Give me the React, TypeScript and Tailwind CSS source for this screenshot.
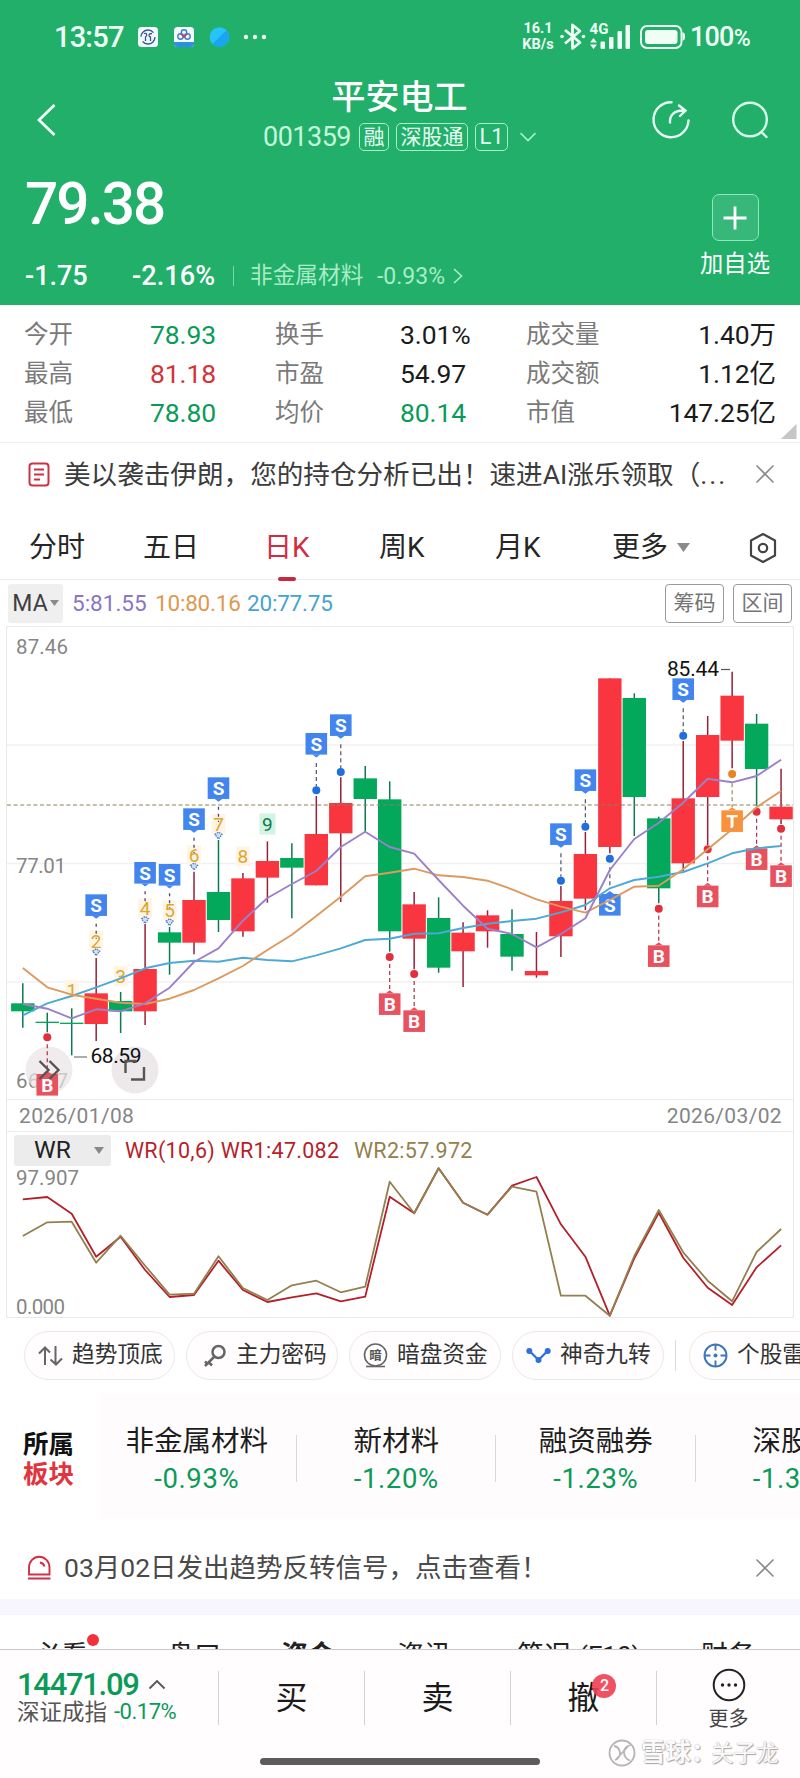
import React from "react";

const STEP = 24.46;
const cx = (i: number) => 22.8 + STEP * i - 7;
const cy = (v: number) => v / 3 - 7;

// [rising, high, bodyTop, bodyBottom, low]
const candles: [number, number, number, number, number][] = [
  [0, 1090, 1150, 1174, 1223], [0, 1178, 1205, 1209, 1237], [0, 1165, 1208, 1212, 1306],
  [1, 1014, 1120, 1212, 1263], [0, 1116, 1143, 1174, 1239], [1, 912, 1047, 1174, 1215],
  [0, 921, 937, 968, 1064], [1, 755, 840, 968, 1003], [0, 660, 816, 900, 936],
  [1, 759, 775, 934, 950], [1, 664, 723, 773, 848], [0, 670, 714, 743, 895],
  [1, 528, 642, 796, 796], [1, 472, 549, 640, 846], [0, 438, 475, 537, 635],
  [0, 484, 538, 934, 995], [1, 816, 853, 956, 1048], [0, 832, 894, 1043, 1058],
  [1, 907, 938, 994, 1101], [1, 871, 886, 934, 983], [0, 868, 942, 1010, 1052],
  [1, 936, 1053, 1066, 1073], [1, 798, 843, 949, 1011], [1, 636, 702, 836, 870],
  [1, 175, 175, 681, 700], [0, 220, 234, 531, 648], [0, 590, 595, 805, 850],
  [1, 363, 535, 730, 755], [1, 288, 345, 531, 675], [1, 155, 227, 362, 445],
  [0, 282, 311, 447, 558], [1, 446, 560, 598, 612],
];

const ma5 = [1152, 1166, 1195, 1168, 1174, 1150, 1103, 1026, 985, 902, 834, 792, 753, 681, 635, 681, 701, 780, 857, 926, 942, 982, 942, 895, 750, 657, 608, 548, 476, 487, 468, 419];
const ma10 = [1044, 1102, 1124, 1136, 1148, 1152, 1136, 1110, 1075, 1038, 990, 944, 888, 830, 769, 758, 746, 766, 771, 782, 808, 838, 860, 878, 840, 800, 797, 748, 688, 628, 562, 513];
const ma20 = [1186, 1150, 1128, 1102, 1075, 1045, 1029, 1022, 1025, 1013, 1020, 1024, 1006, 985, 960, 956, 941, 940, 924, 911, 903, 896, 877, 855, 805, 780, 770, 756, 730, 700, 685, 678];
const wr1 = [328, 321, 371, 500, 440, 540, 621, 615, 512, 600, 636, 622, 610, 634, 620, 320, 370, 235, 338, 374, 287, 261, 403, 500, 677, 505, 368, 503, 593, 645, 532, 466];
const wr2 = [438, 397, 395, 518, 437, 527, 614, 611, 499, 594, 630, 586, 572, 607, 590, 275, 370, 235, 338, 374, 290, 305, 617, 617, 677, 498, 360, 487, 572, 634, 486, 417];

const line = (vals: number[], y: (v: number) => number) =>
  vals.map((v, i) => `${cx(i).toFixed(1)},${y(v).toFixed(1)}`).join(" ");

// [index, box top, dot]
const sells: [number, number, number][] = [[12, 339, 511], [13, 283, 456], [22, 610, 782], [23, 448, 620], [27, 175, 347]];
const countedSells: [number, number, number][] = [[3, 823, 998], [5, 726, 901], [6, 732, 908], [7, 565, 741], [8, 472, 648]];
const buys: [number, number, number][] = [[1, 1362, 1252], [15, 1120, 1011], [16, 1171, 1062], [26, 976, 866], [28, 797, 688], [30, 685, 575], [31, 736, 626]];
const counts: [string, number, number][] = [["1", 2, 1110], ["2", 3, 962], ["3", 4, 1068], ["4", 5, 865], ["5", 6, 871], ["6", 7, 706], ["7", 8, 612], ["8", 9, 709]];

const SANS = "font-['Roboto','Noto_Sans_CJK_SC',sans-serif]";

function Flag({ x, top, letter, fill, up }: { x: number; top: number; letter: string; fill: string; up?: boolean }) {
  return (
    <g>
      <rect x={x - 10.8} y={top} width={21.6} height={21.6} fill={fill} />
      <path d={up ? `M${x - 4} ${top}l4 -3l4 3z` : `M${x - 4} ${top + 21.5}l4 3l4 -3z`} fill={fill} />
      <text x={x} y={top + 17.5} textAnchor="middle" fill="#fff" className="text-[19px] font-bold">{letter}</text>
    </g>
  );
}

function KChart() {
  return (
    <svg width={786} height={472} viewBox="0 0 786 472" className={`block ${SANS}`}>
      {[118, 236.5, 355].map((y) => <line key={y} x1={0} x2={786} y1={y} y2={y} stroke="#f1f1f1" strokeWidth={1.4} />)}
      <g fill="#858585" className="text-[20.5px]">
        <text x={9} y={26.5} textLength={52}>87.46</text>
        <text x={9} y={246} textLength={50}>77.01</text>
        <text x={9} y={461} textLength={52}>66.57</text>
      </g>
      {counts.map(([n, i, v]) => <rect key={n} x={cx(i) - 7} y={cy(v) - 10} width={14} height={20} fill="#fff5e6" />)}
      {candles.map(([r, h, t, b, l], i) => (
        <g key={i}>
          <line x1={cx(i)} x2={cx(i)} y1={cy(h)} y2={cy(l)} stroke={r ? "#98203a" : "#0b7a4c"} strokeWidth={1.5} />
          <rect x={cx(i) - 11.7} y={cy(t)} width={23.4} height={(b - t) / 3} fill={r ? "#f93640" : "#03a85b"} />
        </g>
      ))}
      <line x1={0} x2={786} y1={178} y2={178} stroke="#8d7f58" strokeWidth={1.2} strokeDasharray="4 2.6" />
      {sells.map(([i, top, dot]) => (
        <g key={i}>
          <line x1={cx(i)} x2={cx(i)} y1={cy(top + 90)} y2={cy(dot) - 4} stroke="#4f5266" strokeWidth={1.2} strokeDasharray="4 3" />
          <circle cx={cx(i)} cy={cy(dot)} r={4} fill="#1f6fe0" />
          <Flag x={cx(i)} top={cy(top)} letter="S" fill="#4285ee" />
        </g>
      ))}
      {countedSells.map(([i, top, dot]) => (
        <g key={i}>
          <line x1={cx(i)} x2={cx(i)} y1={cy(top + 88)} y2={cy(dot) - 14} stroke="#4a4a66" strokeWidth={1.3} strokeDasharray="3 4" />
          <path d={`M${cx(i) - 3.5} ${cy(dot) - 1.5}l3.5 -2.5l3.5 2.5l-3.5 4.5z`} fill="#cfe2f7" stroke="#4b7bbd" strokeWidth={1.3} strokeDasharray="1.5 1" />
          <Flag x={cx(i)} top={cy(top)} letter="S" fill="#4285ee" />
        </g>
      ))}
      {counts.map(([n, i, v]) => (
        <text key={n} x={cx(i)} y={cy(v) + 7} textAnchor="middle" fill="#dfa62c" className="text-[19px]">{n}</text>
      ))}
      <rect x={cx(10) - 8} y={cy(612) - 10.5} width={16} height={21} fill="#d3f3e3" />
      <text x={cx(10)} y={cy(612) + 7} textAnchor="middle" fill="#0b7a4c" className="text-[19px]">9</text>
      <circle cx={42} cy={443} r={23.5} fill="#e9e4e6" fillOpacity={0.7} />
      <circle cx={128} cy={443} r={23.5} fill="#e9e4e6" fillOpacity={0.8} />
      {buys.map(([i, top, dot]) => (
        <g key={i}>
          <line x1={cx(i)} x2={cx(i)} y1={cy(dot) + 7} y2={cy(top) - 3} stroke="#a8304a" strokeWidth={1.2} strokeDasharray="4 3" />
          <circle cx={cx(i)} cy={cy(dot)} r={4} fill="#e12f3c" />
          <Flag x={cx(i)} top={cy(top)} letter="B" fill="#e8525f" up />
        </g>
      ))}
      <g>
        <line x1={cx(29)} x2={cx(29)} y1={cy(490)} y2={cy(562)} stroke="#a58a4a" strokeWidth={1.2} strokeDasharray="4 3" />
        <circle cx={cx(29)} cy={cy(462)} r={4} fill="#ea8420" />
        <Flag x={cx(29)} top={cy(571)} letter="T" fill="#fb9138" up />
        <line x1={cx(24)} x2={cx(24)} y1={cy(742)} y2={cy(800)} stroke="#4f5266" strokeWidth={1.2} strokeDasharray="4 3" />
        <circle cx={cx(24)} cy={cy(716)} r={4} fill="#1f6fe0" />
        <Flag x={cx(24)} top={cy(822)} letter="S" fill="#4285ee" up />
      </g>
      <g fill="none" strokeWidth={1.9} strokeLinejoin="round">
        <polyline points={line(ma20, cy)} stroke="#4da9d6" />
        <polyline points={line(ma10, cy)} stroke="#dd995e" />
        <polyline points={line(ma5, cy)} stroke="#9b80ca" />
      </g>
      <line x1={67} x2={80} y1={430} y2={430} stroke="#777" strokeWidth={1.2} />
      <line x1={714} x2={723} y1={42.5} y2={42.5} stroke="#555" strokeWidth={1.2} />
      <g fill="#111" className="text-[21px]">
        <text x={660} y={48.5} textLength={52}>85.44</text>
        <text x={83.5} y={435.5} textLength={51}>68.59</text>
      </g>
      <g fill="none" stroke="#555" strokeWidth={2.4}>
        <path d="M32.5 434l9 9l-9 9M42.500 434l9 9l-9 9" />
        <path d="M118.500 446v-12h11M137 440v12.500h-13" />
      </g>
    </svg>
  );
}

function WrChart() {
  const y = (v: number) => v / 3 - 76;
  return (
    <svg width={786} height={151} viewBox="0 0 786 151" className={`block ${SANS}`}>
      <g fill="#858585" className="text-[20.5px]">
        <text x={9} y={18.5} textLength={63}>97.907</text>
        <text x={9} y={148} textLength={49}>0.000</text>
      </g>
      <g fill="none" strokeWidth={1.8} strokeLinejoin="round">
        <polyline points={line(wr1, y)} stroke="#b41f2a" />
        <polyline points={line(wr2, y)} stroke="#92804f" />
      </g>
    </svg>
  );
}

function StatusBar() {
  return (
    <div className="flex h-[74px] items-center pl-[54px] text-[#effff6]">
      <span className="w-[84px] text-[29px] font-medium leading-none tracking-[-0.8px]">13:57</span>
      <svg width="132" height="22" viewBox="0 0 132 22">
        <rect x="0" y="1" width="20" height="20" rx="3.5" fill="#f4f9fb" />
        <circle cx="10" cy="11" r="7" fill="none" stroke="#31589a" strokeWidth="1.3" strokeDasharray="17 5" />
        <path d="M6 7.500c3-1 3.500 2 1.500 3.500v4M14 7.500c-4 0-3.500 3-1.500 3.500v4" fill="none" stroke="#31589a" strokeWidth="1.3" />
        <rect x="36" y="1" width="20" height="20" rx="3.5" fill="#f4f9fb" />
        <path d="M36 16h20v1.500a3.500 3.500 0 0 1-3.500 3.500h-13a3.500 3.500 0 0 1-3.500-3.500z" fill="#2c8fe0" />
        <g fill="none" strokeWidth="1.4"><circle cx="46" cy="6.500" r="2.700" stroke="#3a7fd0" /><circle cx="42.500" cy="10.500" r="2.700" stroke="#3a7fd0" /><circle cx="49.500" cy="10.500" r="2.700" stroke="#3a7fd0" /><path d="M43 8l3 3l3-3" stroke="#d43a50" /></g>
        <circle cx="81.500" cy="11" r="9.800" fill="#27c4fb" />
        <path d="M74.500 18L88.500 4a9.800 9.800 0 0 1-14 14z" fill="#1aa5f0" />
        <g fill="#effff6"><circle cx="108" cy="11" r="2.200" /><circle cx="117" cy="11" r="2.200" /><circle cx="126" cy="11" r="2.200" /></g>
      </svg>
      <div className="ml-[250px] w-[36px] text-center text-[14.5px] font-bold leading-[16px]">
        <div>16.1</div>
        <div>KB/s</div>
      </div>
      <svg width="130" height="30" viewBox="0 0 130 30" className="ml-[1px]">
        <g fill="none" stroke="#effff6" strokeWidth="2.8" strokeLinejoin="round">
          <path d="M8 8L23 20.500L15.500 26.500V3L23 9L8 21.500" />
        </g>
        <circle cx="5" cy="14.500" r="1.800" fill="#effff6" /><circle cx="26.500" cy="14.500" r="1.800" fill="#effff6" />
        <text x="32.500" y="12" fill="#effff6" className="text-[15px] font-bold" textLength="19">4G</text>
        <g fill="#effff6">
          <path d="M36.500 16l3.500 4.500h-7zM36.500 27l-3.500-4.500h7z" />
          <rect x="43.500" y="19.500" width="4.500" height="7.500" rx="1" /><rect x="52" y="15" width="4.500" height="12" rx="1" /><rect x="60.500" y="9" width="4.500" height="18" rx="1" /><rect x="68.500" y="3" width="4.500" height="24" rx="1" />
          <rect x="88" y="8" width="32.500" height="14" rx="3" />
          <path d="M125.500 10.500v8c2 0 2.500-1.500 2.500-4s-.5-4-2.500-4z" />
        </g>
        <rect x="84" y="4" width="40.500" height="22" rx="6" fill="none" stroke="#effff6" strokeWidth="1.900" />
      </svg>
      <span className="ml-[3px] whitespace-nowrap text-[27px] font-medium leading-none tracking-[-0.8px]">100<span className="text-[23px]">%</span></span>
    </div>
  );
}

function Tag({ children }: { children: React.ReactNode }) {
  return <span className="flex h-[28px] shrink-0 items-center whitespace-nowrap rounded-[5px] border border-[#a5f0c9] px-[3.5px] text-[21px] leading-none">{children}</span>;
}

function Header() {
  return (
    <header className="h-[305px] bg-[#21af69] text-white">
      <StatusBar />
      <div className="flex h-[84px] items-start">
        <svg width="20" height="34" viewBox="0 0 20 34" className="ml-[37px] mt-[29px]"><path d="M17.500 2L2 17l15.500 15" fill="none" stroke="#f0fff7" strokeWidth="2.800" /></svg>
        <div className="ml-[206px] w-[273px]">
          <div className="text-center text-[34px] font-medium leading-[46px]">平安电工</div>
          <div className="mt-[3px] flex h-[28px] items-center text-[#e6fff2]">
            <span className="w-[96px] shrink-0 text-[27px] leading-none tracking-[-0.5px] text-[#c5f8dd]">001359</span>
            <Tag>融</Tag>
            <span className="w-[7px] shrink-0" />
            <Tag>深股通</Tag>
            <span className="w-[7px] shrink-0" />
            <Tag><span className="text-[22px]">L1</span></Tag>
            <svg width="16" height="10" viewBox="0 0 16 10" className="ml-[12px] shrink-0"><path d="M.5 1l7.500 7.500L15.500 1" fill="none" stroke="#a5f0c9" strokeWidth="1.700" /></svg>
          </div>
        </div>
        <svg width="120" height="44" viewBox="0 0 120 44" className="ml-[114px] mt-[24px]">
          <g fill="none" stroke="#e9fff4" strokeWidth="2.400" strokeLinecap="round">
            <path d="M21.500 4.200A17.500 17.500 0 1 0 38.500 22.500" />
            <path d="M20 24.500c-.5-7 4-12 13-12M29 7.500l6.500 5l-5.500 5.500" />
            <circle cx="100" cy="21.500" r="16.800" stroke="#d8fbe8" />
            <path d="M111.500 34l5 5" stroke="#d8fbe8" />
          </g>
        </svg>
      </div>
      <div className="flex h-[147px]">
        <div className="w-[676px] pl-[25px]">
          <div className="mt-[16px] h-[60px] text-[58.5px] font-medium leading-[60px] tracking-[-2px]">79.38</div>
          <div className="mt-[25px] flex h-[34px] items-center whitespace-nowrap leading-none">
            <span className="w-[107px] text-[27px] font-medium">-1.75</span>
            <span className="w-[101px] text-[27px] font-medium tracking-[0.1px]">-2.16%</span>
            <span className="mr-[16px] h-[20px] w-px bg-[#7bd5a5]" />
            <span className="w-[127px] text-[22.7px] text-[#a8ecc8]">非金属材料</span>
            <span className="w-[75px] text-[23px] text-[#a8ecc8]">-0.93%</span>
            <svg width="12" height="16" viewBox="0 0 12 16"><path d="M2 1l7.500 7L2 15" fill="none" stroke="#a8ecc8" strokeWidth="1.700" /></svg>
          </div>
        </div>
        <div className="flex w-[118px] flex-col items-center pt-[36px]">
          <div className="flex h-[47px] w-[47px] items-center justify-center rounded-[7px] border border-[#8fe8bb] bg-[#38b77a]">
            <svg width="24" height="24" viewBox="0 0 24 24"><path d="M12 .5v23M.5 12h23" stroke="#fff" strokeWidth="2.800" /></svg>
          </div>
          <div className="mt-[7px] text-[23.3px] leading-[32px]">加自选</div>
        </div>
      </div>
    </header>
  );
}

const G = "text-[#0a9b58]";
const quotes: [string, string, string][][] = [
  [["今开", "78.93", G], ["换手", "3.01%", "text-[#1b1b1b]"], ["成交量", "1.40万", "text-[#1b1b1b]"]],
  [["最高", "81.18", "text-[#d23238]"], ["市盈", "54.97", "text-[#1b1b1b]"], ["成交额", "1.12亿", "text-[#1b1b1b]"]],
  [["最低", "78.80", G], ["均价", "80.14", G], ["市值", "147.25亿", "text-[#1b1b1b]"]],
];

function Close() {
  return <svg width="20" height="20" viewBox="0 0 20 20"><path d="M1.500 1.500l17 17M18.500 1.500l-17 17" stroke="#8a8a8a" strokeWidth="1.600" /></svg>;
}

function Quotes() {
  return (
    <section className="relative h-[138px] border-b border-[#efefef] pt-[10.500px]">
      {quotes.map((row, r) => (
        <div key={r} className="flex h-[39.3px] items-center whitespace-nowrap pl-[24px] pr-[24px] text-[24.5px] leading-none">
          {row.map(([k, v, c], i) => (
            <React.Fragment key={k}>
              <span className={i === 2 ? "w-[100px] text-[#7a7a7a]" : i === 1 ? "w-[125px] text-[#7a7a7a]" : "w-[126px] text-[#7a7a7a]"}>{k}</span>
              <span className={`text-[26.5px] tracking-[-0.1px] ${c} ${i === 2 ? "flex-1 text-right" : i === 1 ? "w-[126px]" : "w-[125px]"}`}>{v}</span>
            </React.Fragment>
          ))}
        </div>
      ))}
      <svg width="16" height="15" viewBox="0 0 16 15" className="absolute bottom-[3px] right-[3px]"><path d="M15.500 0v15H0z" fill="#c6c6c6" /></svg>
    </section>
  );
}

function Toolbar() {
  return (
    <>
      <div className="flex h-[62px] items-center pl-[28px] text-[26.6px] text-[#3c3c3c]">
        <svg width="22" height="25" viewBox="0 0 22 25"><rect x="1.500" y="1.500" width="19" height="22" rx="3" fill="none" stroke="#cb3247" strokeWidth="2" /><path d="M6 7.500h10M6 12.500h10M6 17.500h6" stroke="#cb3247" strokeWidth="1.800" /></svg>
        <span className="ml-[14px] w-[691px] whitespace-nowrap pt-[2px] leading-none">美以袭击伊朗，您的持仓分析已出！速进AI涨乐领取（<span className="tracking-[2px]">...</span></span>
        <Close />
      </div>
      <nav className="flex h-[75px] items-center border-b border-[#ececec] pl-[29px] pt-[11px] text-[28px] leading-none text-[#262626]">
        <span className="w-[114px]">分时</span>
        <span className="w-[121px]">五日</span>
        <span className="relative w-[115px] text-[#d12c40]">日K<i className="absolute -bottom-[19px] left-[14px] h-[4px] w-[18px] rounded-sm bg-[#c52a40]" /></span>
        <span className="w-[116px]">周K</span>
        <span className="w-[117px]">月K</span>
        <span className="w-[65px]">更多</span>
        <svg width="13" height="9" viewBox="0 0 13 9"><path d="M0 0h13L6.500 9z" fill="#8a8a8a" /></svg>
        <svg width="30" height="32" viewBox="0 0 30 32" className="ml-[58px]"><path d="M15 2L27 8.500v15L15 30L3 23.500v-15z" fill="none" stroke="#444" strokeWidth="2.200" strokeLinejoin="round" /><circle cx="15" cy="16" r="4.200" fill="none" stroke="#444" strokeWidth="2.200" /></svg>
      </nav>
      <div className="flex h-[46px] items-center pl-[8px] pr-[8px] text-[22.5px] leading-none">
        <span className="flex h-[39px] w-[55px] items-center justify-center gap-[2px] rounded-[3px] bg-[#efefef] text-[23px] text-[#3f3f3f]">
          MA<svg width="9" height="6" viewBox="0 0 9 6"><path d="M0 0h9L4.500 6z" fill="#8a8a8a" /></svg>
        </span>
        <span className="ml-[9px] w-[83px] text-[#8b76c4]">5:81.55</span>
        <span className="w-[92px] tracking-[-0.2px] text-[#e0984f]">10:80.16</span>
        <span className="tracking-[-0.2px] text-[#46a3cf]">20:77.75</span>
        <span className="ml-auto flex h-[39px] w-[59px] items-center justify-center rounded-[4px] border border-[#9a9a9a] text-[21px] text-[#757575]">筹码</span>
        <span className="ml-[9px] flex h-[39px] w-[59px] items-center justify-center rounded-[4px] border border-[#9a9a9a] text-[21px] text-[#757575]">区间</span>
      </div>
    </>
  );
}

function Pill({ icon, label, w }: { icon: React.ReactNode; label: string; w: string }) {
  return (
    <div className={`flex h-[49px] shrink-0 items-center gap-[9px] rounded-full border border-[#ebe7e9] bg-[#fffdfe] pl-[13px] text-[22.7px] leading-none text-[#333] ${w}`}>
      {icon}<span className="whitespace-nowrap">{label}</span>
    </div>
  );
}

function Pills() {
  return (
    <div className="flex h-[75px] items-start gap-[11px] overflow-hidden pl-[24px] pt-[13px]">
      <Pill w="w-[151px]" label="趋势顶底" icon={<svg width="25" height="22" viewBox="0 0 25 22"><path d="M7 20V3M1 8.500L7 2.500l5 5M17.500 1v18M12.500 14.500l5.500 5l6-6" fill="none" stroke="#666" strokeWidth="2" /></svg>} />
      <Pill w="w-[152px] !pl-[16px]" label="主力密码" icon={<svg width="24" height="24" viewBox="0 0 24 24"><g fill="none" stroke="#666" strokeWidth="2.500"><circle cx="15.500" cy="8" r="6" /><path d="M11.500 12.500L2 22M5.500 18l3.500 3.500M2 17.500l2 2" /></g></svg>} />
      <Pill w="w-[152px]" label="暗盘资金" icon={<svg width="25" height="25" viewBox="0 0 25 25"><circle cx="12.500" cy="12" r="11" fill="none" stroke="#666" strokeWidth="1.600" /><path d="M3 23.500h19" stroke="#666" strokeWidth="1.600" /><text x="12.500" y="17" textAnchor="middle" fill="#555" className="text-[12.5px] font-bold">暗</text></svg>} />
      <Pill w="w-[152px]" label="神奇九转" icon={<svg width="25" height="17" viewBox="0 0 25 17"><path d="M3.500 4L12.500 13L21.500 4" fill="none" stroke="#2f6fdc" strokeWidth="2.200" /><circle cx="3.300" cy="4" r="3" fill="#2f6fdc" /><circle cx="12.500" cy="13" r="3" fill="#2f6fdc" /><circle cx="21.700" cy="4" r="3" fill="#2f6fdc" /></svg>} />
      <span className="mr-[2px] mt-[9px] h-[31px] w-px shrink-0 bg-[#dcdcdc]" />
      <Pill w="w-[152px]" label="个股雷达" icon={<svg width="25" height="25" viewBox="0 0 25 25"><g fill="none" stroke="#3d76bd" strokeWidth="1.900"><circle cx="12.500" cy="12.500" r="11" /><path d="M12.500 1.500v6M12.500 17.500v6M1.500 12.500h6M17.500 12.500h6" /></g><circle cx="12.500" cy="12.500" r="2" fill="#3d76bd" /></svg>} />
    </div>
  );
}

const sectors: [string, string][] = [["非金属材料", "-0.93%"], ["新材料", "-1.20%"], ["融资融券", "-1.23%"], ["深股通", "-1.31%"]];

function Sectors() {
  return (
    <section className="flex h-[126px] overflow-hidden">
      <div className="w-[100px] shrink-0 pl-[23px] pt-[36px] text-[25.5px] font-bold leading-[30px]">
        <div className="text-[#111]">所属</div>
        <div className="text-[#e0343f]">板块</div>
      </div>
      <div className="flex shrink-0 bg-[#fffcfd]">
        {sectors.map(([n, p], i) => (
          <div key={n} className={`relative w-[199.5px] shrink-0 pt-[30px] text-center ${i === 0 ? "-ml-[3px]" : ""}`}>
            <div className="text-[28.5px] leading-[38px] text-[#1d1d1d]">{n}</div>
            <div className="text-[27.5px] leading-[36px] tracking-[0.6px] text-[#0a9b58]">{p}</div>
            {i < 3 && <i className="absolute right-0 top-[42px] h-[47px] w-px bg-[#d9d9d9]" />}
          </div>
        ))}
      </div>
    </section>
  );
}

function BottomBar() {
  const cell = "flex h-[54px] items-center justify-center border-l border-[#d2d2d2] w-[146px] text-[32px] leading-none text-[#1a1a1a]";
  return (
    <footer className="relative h-[130px] border-t border-[#c9c9c9] bg-[#fffdfe]">
      <div className="flex items-start pt-[21px]">
        <div className="w-[218px] pl-[17px]">
          <div className="flex h-[26px] items-center text-[31px] font-medium leading-none tracking-[-1.3px] text-[#0a9b58]">
            14471.09
            <svg width="18" height="11" viewBox="0 0 18 11" className="ml-[9px]"><path d="M1.500 9.500L9 2l7.500 7.500" fill="none" stroke="#555" strokeWidth="1.800" /></svg>
          </div>
          <div className="mt-[2px] flex h-[26px] items-center whitespace-nowrap text-[22.5px] leading-none text-[#555]">
            深证成指<span className="ml-[7px] text-[22px] tracking-[-0.5px] text-[#0a9b58]">-0.17%</span>
          </div>
        </div>
        <div className={cell}>买</div>
        <div className={cell}>卖</div>
        <div className={cell}>
          <span className="relative">撤<i className="absolute -top-[8px] left-[25px] flex h-[24px] w-[24px] items-center justify-center rounded-full bg-[#ee3f50]/90 text-[16px] font-medium not-italic text-white">2</i></span>
        </div>
        <div className="flex h-[54px] w-[144px] flex-col items-center border-l border-[#d2d2d2]">
          <svg width="34" height="34" viewBox="0 0 34 34" className="-mt-[3px] shrink-0"><circle cx="17" cy="17" r="15.300" fill="none" stroke="#222" strokeWidth="2" /><g fill="#222"><circle cx="10.500" cy="17" r="1.700" /><circle cx="17" cy="17" r="1.700" /><circle cx="23.500" cy="17" r="1.700" /></g></svg>
          <span className="mt-[6px] text-[20px] leading-[22px] text-[#444]">更多</span>
        </div>
      </div>
      <i className="absolute left-[260px] top-[108px] h-[7px] w-[280px] rounded-full bg-[#5c5c5c]" />
      <div className="absolute left-[608px] top-[89px] flex items-center gap-[5px] whitespace-nowrap text-[25px] leading-[28px] text-[#fbf9fa] [text-shadow:1px_1px_1px_#a5a5a5,0_0_1px_#999]">
        <svg width="28" height="28" viewBox="0 0 28 28"><g fill="none" stroke="#b5b5b5" strokeWidth="1.800"><circle cx="14" cy="14" r="12.500" /><path d="M6 7c3 .5 5.500 3 6 6.500c.3 3.500-2 6.500-5 7.500M22.500 6c-4 1-6.500 4-6.500 7.500c.3 4 3 7 6 8M8.500 20l11-12" /></g></svg>
        <span className="font-bold">雪球：</span><span className="-ml-[10px] text-[22.5px]">关子龙</span>
      </div>
    </footer>
  );
}

export default function App() {
  return (
    <div className={`h-[1778px] w-[800px] overflow-hidden bg-white ${SANS}`}>
      <Header />
      <Quotes />
      <Toolbar />
      <div className="ml-[6px] w-[788px] border border-[#e9e9e9]">
        <KChart />
        <div className="flex h-[33px] items-center justify-between border-y border-[#ececec] pl-[12px] pr-[11px] pt-[2px] text-[21px] leading-none tracking-[0.35px] text-[#858585]">
          <span>2026/01/08</span>
          <span>2026/03/02</span>
        </div>
        <div className="flex h-[34px] items-center pl-[7px] pt-[2px] text-[21.5px] leading-none">
          <span className="flex h-[31px] w-[97px] items-center justify-between rounded-[3px] bg-[#ececec] pl-[20px] pr-[7px] text-[24.5px] text-[#222]">
            WR<svg width="10" height="7" viewBox="0 0 10 7"><path d="M0 0h10L5 7z" fill="#888" /></svg>
          </span>
          <span className="ml-[14px] w-[229px] whitespace-nowrap pt-[2px] tracking-[0.3px] text-[#b51f2b]">WR(10,6) WR1:47.082</span>
          <span className="pt-[2px] tracking-[0.3px] text-[#93814d]">WR2:57.972</span>
        </div>
        <WrChart />
      </div>
      <Pills />
      <Sectors />
      <div className="flex h-[80px] items-center pl-[26px] pt-[18px] text-[26.5px] text-[#4a4a4a]">
        <svg width="26" height="26" viewBox="0 0 26 26"><path d="M3 19.500V12.500a10 10.500 0 0 1 20.500 0v7z" fill="none" stroke="#cb3247" strokeWidth="1.900" /><path d="M14 7.500c2.500.5 4 2 4.500 4M2 23.500h22.500" fill="none" stroke="#cb3247" strokeWidth="1.900" /></svg>
        <span className="ml-[12px] w-[691px] whitespace-nowrap leading-none">03月02日发出趋势反转信号，点击查看！</span>
        <Close />
      </div>
      <div className="h-[16px] bg-[#f7f6fe]" />
      <div className="relative flex h-[34px] overflow-hidden pl-[34px] pt-[26px] text-[27px] leading-[30px] text-[#222]">
        <span className="w-[133px] shrink-0">必看</span>
        <span className="w-[114px] shrink-0">盘口</span>
        <span className="w-[116px] shrink-0 font-bold">资金</span>
        <span className="w-[120px] shrink-0">资讯</span>
        <span className="w-[184px] shrink-0 whitespace-nowrap">简况<span className="ml-[8px] text-[26px]">(F10)</span></span>
        <span className="shrink-0">财务</span>
        <i className="absolute left-[87px] top-[19px] h-[12px] w-[12px] rounded-full bg-[#f0323c]" />
      </div>
      <BottomBar />
    </div>
  );
}
